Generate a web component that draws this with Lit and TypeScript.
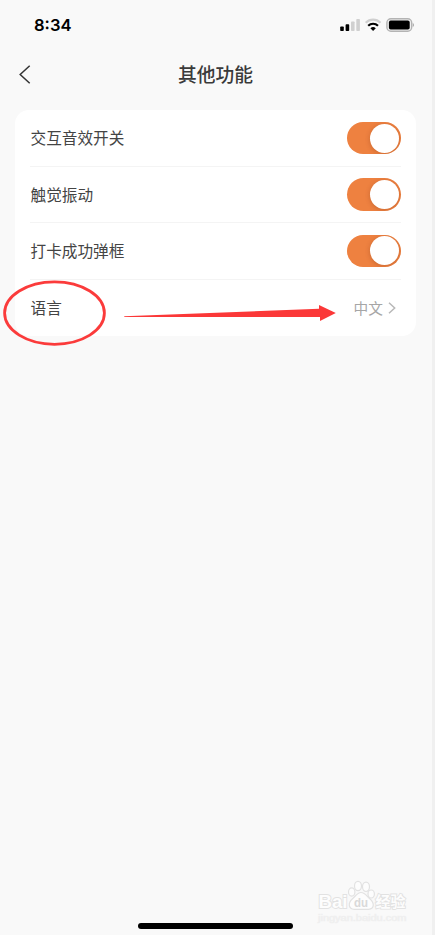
import { LitElement, html, css, svg } from "lit";
import { customElement, property } from "lit/decorators.js";

@customElement("toggle-switch")
class ToggleSwitch extends LitElement {
  static styles = css`
    :host { display: block; }
    .track {
      box-sizing: border-box;
      width: 54px;
      height: 32.6px;
      padding: 0 2px;
      border-radius: 17px;
      background: #ee8140;
      display: flex;
      align-items: center;
      justify-content: flex-end;
      overflow: hidden;
    }
    .knob {
      width: 29px;
      height: 29px;
      border-radius: 50%;
      background: #fff;
      box-shadow: 0 1px 5px rgba(90, 30, 0, 0.25);
    }
  `;
  render() {
    return html`<div class="track"><div class="knob"></div></div>`;
  }
}

@customElement("setting-row")
class SettingRow extends LitElement {
  @property() label = "";
  static styles = css`
    :host {
      display: flex;
      align-items: center;
      justify-content: space-between;
      box-sizing: border-box;
      height: 56.4px;
      border-bottom: 1px solid #f4f4f4;
    }
    :host(:last-child) { border-bottom: none; }
    .label { padding-left: 0.5px; font-size: 15.65px; line-height: 24px; color: #444; }
  `;
  render() {
    return html`<span class="label">${this.label}</span><slot></slot>`;
  }
}

@customElement("app-root")
class AppRoot extends LitElement {
  static styles = css`
    :host {
      display: flex;
      flex-direction: column;
      position: relative;
      box-sizing: border-box;
      width: 435px;
      height: 935px;
      overflow: hidden;
      background: #f9f9f9;
      border-right: 3px solid #f0f0f0;
      font-family: "Noto Sans CJK SC", sans-serif;
    }
    svg { display: block; }
    .status {
      height: 50px;
      display: flex;
      align-items: center;
      justify-content: space-between;
      padding: 0 17px 0 34px;
      box-sizing: border-box;
    }
    .time { font: 600 16.6px/20px Inter, sans-serif; color: #000; }
    .nav {
      height: 50px;
      display: grid;
      grid-template-columns: 50px 1fr 50px;
      align-items: center;
    }
    .back { padding-left: 19px; }
    .title {
      text-align: center;
      font-size: 18.75px;
      line-height: 28px;
      font-weight: 500;
      color: #3a3a3a;
      padding: 0 1px 2px 0;
    }
    .card {
      box-sizing: border-box;
      margin: 10px 16px 0 15px;
      height: 226px;
      padding: 0.5px 15px 0;
      border-radius: 14px;
      background: #fff;
    }
    .value {
      display: flex;
      align-items: center;
      gap: 5px;
      padding-right: 5px;
      font-size: 14.7px;
      line-height: 22px;
      color: #a6a6a6;
    }
    .home {
      position: absolute;
      left: 138px;
      bottom: 6px;
      width: 155px;
      height: 6px;
      border-radius: 3px;
      background: #000;
    }
    .marks { position: absolute; left: 0; top: 270px; }
    .watermark { position: absolute; left: 312px; top: 876px; }
  `;

  renderStatusIcons() {
    return html`<svg width="76" height="16" viewBox="339 17 76 16">
      <rect x="340.2" y="26.5" width="3.6" height="4.5" rx="0.8" />
      <rect x="345.6" y="24.3" width="3.6" height="6.7" rx="0.8" />
      <rect x="351" y="21.5" width="3.6" height="9.5" rx="0.8" fill="#d0d0d0" />
      <rect x="356.3" y="19" width="3.6" height="12" rx="0.8" fill="#d0d0d0" />
      <g fill="none" stroke-width="2.1">
        <path d="M365.7 22.7A10.5 10.5 0 0 1 380.5 22.7" stroke="#d0d0d0" />
        <path d="M368.2 25.8A7 7 0 0 1 378 25.8" stroke="#000" />
      </g>
      <path d="M373.1 31l-2.7-2.7a3.8 3.8 0 0 1 5.4 0z" />
      <rect x="386.9" y="18.8" width="24.8" height="12.4" rx="4" fill="#f0f0f0" stroke="#b4b4b4" stroke-width="1.4" />
      <rect x="388.9" y="20.6" width="20.8" height="8.9" rx="1.8" />
      <path d="M412.8 23v4c1.4-.6 1.4-3.4 0-4z" fill="#999" />
    </svg>`;
  }

  renderMarks() {
    return html`<svg class="marks" width="345" height="80" viewBox="0 270 345 80">
      <ellipse cx="54.5" cy="313.1" rx="49.9" ry="31.2" fill="none" stroke="#fb3b3b" stroke-width="2.8" />
      <path d="M124 316.2L319 308.8V305L335.8 313L320 321V317H124.5z" fill="#fb3838" />
    </svg>`;
  }

  renderWatermark() {
    const paw = svg`
      <ellipse cx="351.7" cy="892" rx="3.2" ry="4.2" />
      <ellipse cx="358" cy="886" rx="3.5" ry="4.7" />
      <ellipse cx="366" cy="886.8" rx="3.5" ry="4.7" />
      <ellipse cx="371.2" cy="894" rx="3.2" ry="4" />
      <path d="M361 892.5c-3.5 0-5.2 3.2-8 5.8-6 5.2-4.2 10.8 1.2 11h14.4c5.5-.2 6.4-6 1.2-10.5-3.2-2.8-4.8-6.3-8.8-6.3z" />`;
    return html`<svg class="watermark" width="105" height="52" viewBox="312 876 105 52">
      <g fill="#fdfdfd" stroke="#e2e2e2" stroke-width="1.2">
        ${paw}
        <g font-family="Liberation Sans" font-weight="700" paint-order="stroke">
          <text x="318.5" y="907.6" font-size="18" textLength="29" lengthAdjust="spacingAndGlyphs" stroke-width="1.8">Bai</text>
          <text x="354" y="906.5" font-size="13" textLength="14" lengthAdjust="spacingAndGlyphs" fill="#d9d9d9" stroke="none">du</text>
          <text x="375.5" y="906.6" font-size="15" font-family="Noto Sans CJK SC" stroke-width="1.8">经验</text>
        </g>
        <text x="318" y="920.5" font-family="Liberation Sans" font-size="9" textLength="88.5" lengthAdjust="spacingAndGlyphs" fill="#ececec" stroke="#f0f0f0" stroke-width="0.6">jingyan.baidu.com</text>
      </g>
    </svg>`;
  }

  render() {
    return html`
      <div class="status"><span class="time">8:34</span>${this.renderStatusIcons()}</div>
      <div class="nav">
        <div class="back">
          <svg width="12" height="20" viewBox="0 0 12 20" fill="none" stroke="#333" stroke-width="1.5">
            <path d="M10.7.8L1.2 9.5L10.7 18.2" />
          </svg>
        </div>
        <div class="title">其他功能</div>
      </div>
      <div class="card">
        ${["交互音效开关", "触觉振动", "打卡成功弹框"].map(
          (label) => html`<setting-row label=${label}><toggle-switch></toggle-switch></setting-row>`
        )}
        <setting-row label="语言">
          <span class="value">中文
            <svg width="8" height="12" viewBox="0 0 8 12" fill="none" stroke="#b8b8b8" stroke-width="1.5">
              <path d="M1 .7L6.7 6L1 11.3" />
            </svg>
          </span>
        </setting-row>
      </div>
      ${this.renderMarks()} ${this.renderWatermark()}
      <div class="home"></div>
    `;
  }
}
